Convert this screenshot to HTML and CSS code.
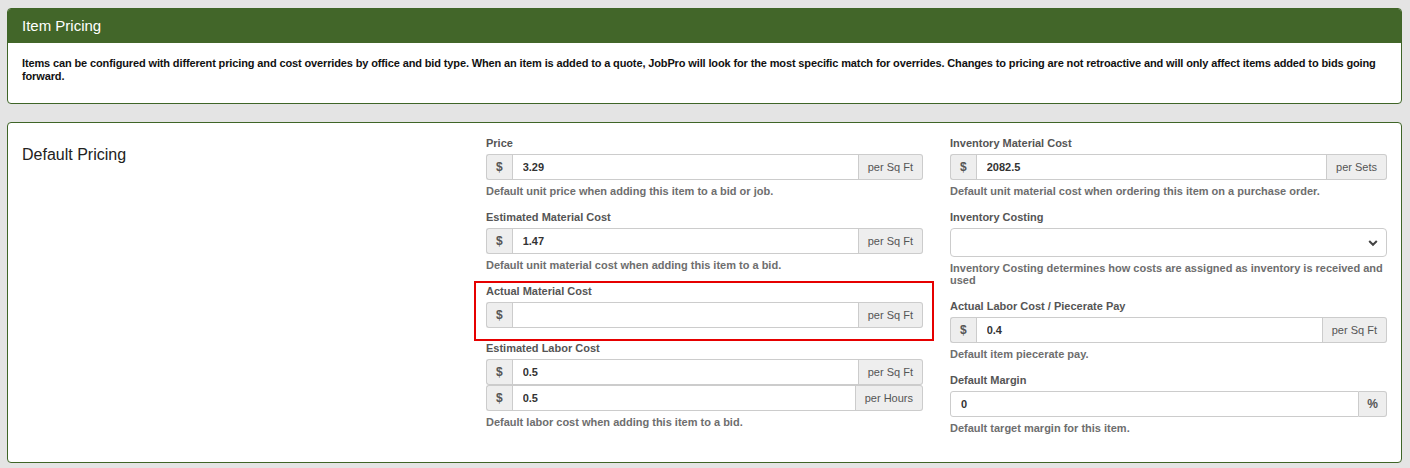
FILE: index.html
```html
<!DOCTYPE html>
<html lang="en">
<head>
<meta charset="utf-8">
<title>Item Pricing</title>
<link rel="stylesheet" href="styles.css">
</head>
<body>
  <section class="panel">
    <div class="panel-heading">Item Pricing</div>
    <div class="panel-body intro">
      Items can be configured with different pricing and cost overrides by office and bid type. When an item is added to a quote, JobPro will look for the most specific match for overrides. Changes to pricing are not retroactive and will only affect items added to bids going forward.
    </div>
  </section>

  <section class="panel pricing">
    <div class="pricing-grid">
      <div class="col">
        <h3 class="section-title">Default Pricing</h3>
      </div>

      <div class="col">
        <div class="form-group">
          <label class="label">Price</label>
          <div class="input-group">
            <span class="addon">$</span>
            <input class="field" type="text" value="3.29">
            <span class="addon unit">per Sq Ft</span>
          </div>
          <p class="help">Default unit price when adding this item to a bid or job.</p>
        </div>

        <div class="form-group">
          <label class="label">Estimated Material Cost</label>
          <div class="input-group">
            <span class="addon">$</span>
            <input class="field" type="text" value="1.47">
            <span class="addon unit">per Sq Ft</span>
          </div>
          <p class="help">Default unit material cost when adding this item to a bid.</p>
        </div>

        <div class="highlight">
          <div class="form-group">
            <label class="label">Actual Material Cost</label>
            <div class="input-group">
              <span class="addon">$</span>
              <input class="field" type="text" value="">
              <span class="addon unit">per Sq Ft</span>
            </div>
          </div>
        </div>

        <div class="form-group">
          <label class="label">Estimated Labor Cost</label>
          <div class="input-group">
            <span class="addon">$</span>
            <input class="field" type="text" value="0.5">
            <span class="addon unit">per Sq Ft</span>
          </div>
          <div class="input-group">
            <span class="addon">$</span>
            <input class="field" type="text" value="0.5">
            <span class="addon unit">per Hours</span>
          </div>
          <p class="help">Default labor cost when adding this item to a bid.</p>
        </div>
      </div>

      <div class="col">
        <div class="form-group">
          <label class="label">Inventory Material Cost</label>
          <div class="input-group">
            <span class="addon">$</span>
            <input class="field" type="text" value="2082.5">
            <span class="addon unit">per Sets</span>
          </div>
          <p class="help">Default unit material cost when ordering this item on a purchase order.</p>
        </div>

        <div class="form-group">
          <label class="label">Inventory Costing</label>
          <div class="select">
            <span class="select-value"></span>
            <svg class="chevron" width="10" height="8" viewBox="0 0 10 8" aria-hidden="true">
              <path d="M1.2 2 L5 5.8 L8.8 2" fill="none" stroke="#444" stroke-width="2"/>
            </svg>
          </div>
          <p class="help">Inventory Costing determines how costs are assigned as inventory is received and used</p>
        </div>

        <div class="form-group">
          <label class="label">Actual Labor Cost / Piecerate Pay</label>
          <div class="input-group">
            <span class="addon">$</span>
            <input class="field" type="text" value="0.4">
            <span class="addon unit">per Sq Ft</span>
          </div>
          <p class="help">Default item piecerate pay.</p>
        </div>

        <div class="form-group">
          <label class="label">Default Margin</label>
          <div class="input-group">
            <input class="field first" type="text" value="0">
            <span class="addon pct">%</span>
          </div>
          <p class="help">Default target margin for this item.</p>
        </div>
      </div>
    </div>
  </section>
</body>
</html>
```

FILE: styles.css
```css
* {
  box-sizing: border-box;
}

body {
  margin: 0;
  padding: 8px 8px 8px 7px;
  background: #e4e4e4;
  font-family: "Liberation Sans", Arial, sans-serif;
  color: #333;
}

/* Panels */
.panel {
  background: #fff;
  border: 1px solid #3f6527;
  border-radius: 4px;
  overflow: hidden;
}

.panel + .panel {
  margin-top: 18px;
}

.panel-heading {
  background: #426629;
  color: #fff;
  font-size: 15px;
  line-height: 18px;
  padding: 8px 14px;
}

.intro {
  padding: 14px 14px 21px;
  font-size: 11px;
  font-weight: bold;
  line-height: 12.5px;
  letter-spacing: -0.13px;
  color: #111;
}

/* Pricing grid */
.pricing-grid {
  display: grid;
  grid-template-columns: repeat(3, 1fr);
  column-gap: 27px;
  padding: 13px 14px 15px;
}

.section-title {
  margin: 10px 0 0;
  font-size: 16px;
  font-weight: normal;
  line-height: 18px;
  color: #222;
}

/* Form fields */
.form-group {
  margin-bottom: 13px;
}

.label {
  display: block;
  font-size: 11px;
  font-weight: bold;
  line-height: 14px;
  color: #555;
  margin-bottom: 4px;
}

.help {
  margin: 5px 0 0;
  font-size: 11px;
  font-weight: bold;
  line-height: 12px;
  color: #6e6e6e;
}

.input-group {
  display: flex;
  height: 26px;
}

.addon {
  display: flex;
  align-items: center;
  justify-content: center;
  flex: none;
  padding: 0 9px;
  background: #eee;
  border: 1px solid #ccc;
  font-size: 12px;
  font-weight: bold;
  color: #555;
}

.addon:first-child {
  border-radius: 3px 0 0 3px;
  border-right: 0;
}

.addon.unit {
  padding: 0 9px;
  font-size: 11px;
  font-weight: normal;
  border-radius: 0 3px 3px 0;
  border-left: 0;
}

.addon.pct {
  padding: 0 8px;
  border-radius: 0 3px 3px 0;
  border-left: 0;
}

.field {
  flex: 1;
  min-width: 0;
  height: 26px;
  margin: 0;
  padding: 0 10px;
  border: 1px solid #ccc;
  background: #fff;
  font-family: inherit;
  font-size: 11px;
  font-weight: bold;
  color: #333;
  outline: none;
}

.field.first {
  border-radius: 3px 0 0 3px;
}

.select {
  display: flex;
  align-items: center;
  justify-content: space-between;
  height: 29px;
  padding: 0 8px 0 10px;
  border: 1px solid #ccc;
  border-radius: 4px;
  background: #fff;
}

/* Highlighted field */
.highlight {
  margin: -3px -11px 0 -12px;
  padding: 1px 9px 11px 10px;
  border: 2px solid #e60000;
}

.highlight .form-group {
  margin-bottom: 0;
}
```
